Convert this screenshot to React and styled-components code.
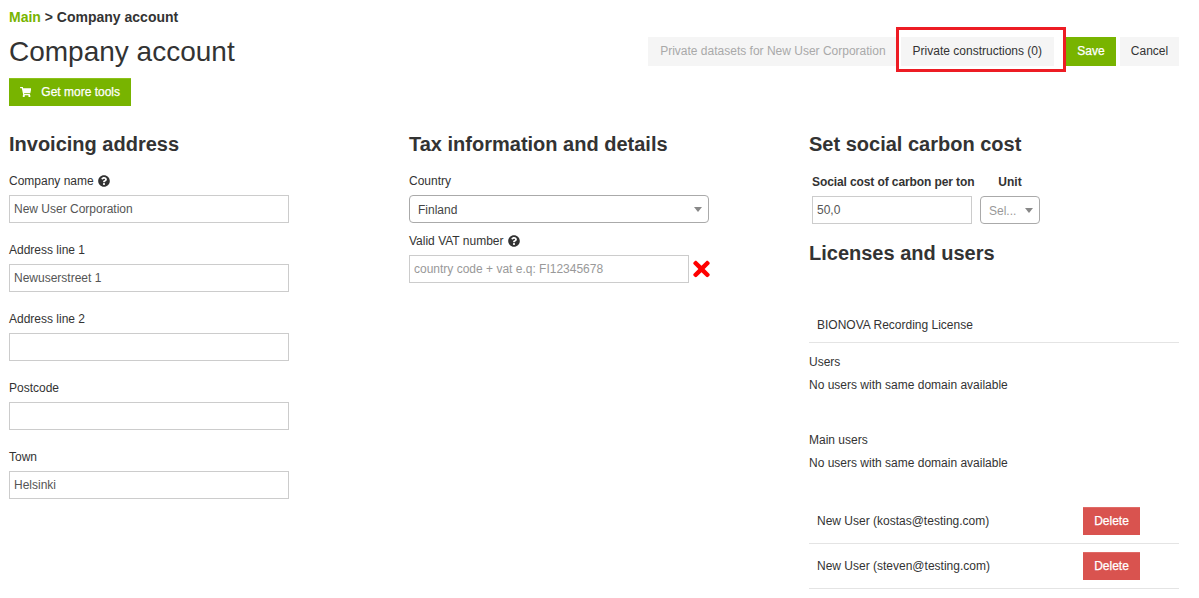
import React from 'react';
import styled, { createGlobalStyle } from 'styled-components';
import { FaShoppingCart, FaQuestionCircle, FaTimes } from 'react-icons/fa';

const GlobalStyle = createGlobalStyle`
  html, body { margin: 0; padding: 0; background: #fff; }
  body {
    font-family: "Liberation Sans", Arial, sans-serif;
    font-size: 12px;
    line-height: 18px;
    color: #333;
  }
  * { box-sizing: border-box; }
`;

const Page = styled.div`
  width: 1199px;
  height: 598px;
  overflow: hidden;
  padding: 8px 20px 0 9px;
`;

const Top = styled.header`
  display: flex;
  justify-content: space-between;
  align-items: flex-start;
`;

const TitleBlock = styled.div`
  display: flex;
  flex-direction: column;
  align-items: flex-start;
`;

const Breadcrumb = styled.div`
  font-weight: bold;
  font-size: 14px;
  line-height: 18px;
  color: #333;
  a { color: #78b400; text-decoration: none; }
`;

const Title = styled.h1`
  margin: 7px 0 0;
  font-size: 28px;
  font-weight: normal;
  line-height: 38px;
  color: #333;
`;

const ToolsButton = styled.button`
  display: flex;
  align-items: center;
  gap: 10px;
  margin-top: 7px;
  width: 122px;
  height: 28px;
  padding: 0 11px 2px;
  border: 0;
  border-top: 1px solid #8cc21a;
  background: #78b400;
  color: #fff;
  font: 12px "Liberation Sans", Arial, sans-serif;
  -webkit-text-stroke: 0.25px #fff;
  white-space: nowrap;
`;

const Actions = styled.div`
  display: flex;
  align-items: center;
  margin-top: 29px;
`;

const ActionButton = styled.button`
  position: relative;
  width: ${(p) => (p.$width ? `${p.$width}px` : 'auto')};
  height: 29px;
  padding: 0 ${(p) => (p.$width ? 0 : 12)}px 2px;
  margin-left: ${(p) => p.$gap || 0}px;
  border: 0;
  background: ${(p) => (p.$primary ? '#78b400' : '#f5f5f5')};
  color: ${(p) => (p.$primary ? '#fff' : p.$muted ? '#a9a9a9' : '#333')};
  font: 12px "Liberation Sans", Arial, sans-serif;
  -webkit-text-stroke: ${(p) => (p.$primary ? '0.25px #fff' : '0')};
`;

const Highlight = styled.span`
  position: absolute;
  left: -5px;
  right: -12px;
  top: -10px;
  bottom: -6px;
  border: 3px solid #ed1c24;
  pointer-events: none;
`;

const Columns = styled.div`
  display: grid;
  grid-template-columns: 400px 400px 370px;
  margin-top: 25px;
`;

const Column = styled.section`
  display: flex;
  flex-direction: column;
  align-items: flex-start;
`;

const Heading = styled.h2`
  margin: 0;
  font-size: 20px;
  font-weight: bold;
  line-height: 26px;
  color: #333;
`;

const Field = styled.div`
  display: flex;
  flex-direction: column;
  margin-top: ${(p) => p.$top ?? 18}px;
`;

const Label = styled.label`
  display: flex;
  align-items: center;
  gap: 4px;
  height: 18px;
  margin-bottom: 5px;
  color: #333;
`;

const Help = styled(FaQuestionCircle)`
  width: 12px;
  height: 12px;
  color: #333;
`;

const Input = styled.input`
  width: ${(p) => p.$width || 280}px;
  height: 28px;
  padding: 0 4px;
  border: 1px solid #ccc;
  outline: 0;
  background: #fff;
  color: #555;
  font: 12px "Liberation Sans", Arial, sans-serif;
  &::placeholder { color: #999; opacity: 1; }
`;

const Select = styled.div`
  display: flex;
  align-items: center;
  justify-content: space-between;
  width: ${(p) => p.$width}px;
  height: 28px;
  padding: 1px 6px 0 8px;
  border: 1px solid #aaa;
  border-radius: 4px;
  color: ${(p) => (p.$muted ? '#999' : '#444')};
  &::after {
    content: "";
    border-style: solid;
    border-width: 5px 4px 0;
    border-color: #888 transparent transparent;
  }
`;

const VatRow = styled.div`
  display: flex;
  align-items: center;
  gap: 4px;
`;

const Cross = styled(FaTimes)`
  width: 17px;
  height: 24px;
  color: #f00;
`;

const CostTable = styled.div`
  display: grid;
  grid-template-columns: 160px 60px;
  column-gap: 8px;
  margin: 16px 0 0 3px;
`;

const CostHead = styled.div`
  font-weight: bold;
  line-height: 18px;
  margin-bottom: 5px;
  letter-spacing: ${(p) => (p.$center ? 0 : -0.1)}px;
  white-space: nowrap;
  text-align: ${(p) => (p.$center ? 'center' : 'left')};
`;

const LicensesHeading = styled(Heading)`
  margin-top: 16px;
`;

const Row = styled.div`
  display: flex;
  align-items: center;
  width: 370px;
  height: ${(p) => p.$height || 45}px;
  padding-left: 8px;
  border-bottom: 1px solid #e4e4e4;
  margin-top: ${(p) => p.$top || 0}px;
`;

const RowName = styled.span`
  width: 266px;
`;

const DeleteButton = styled.button`
  width: 57px;
  height: 28px;
  padding: 0 0 2px;
  border: 0;
  border-top: 1px solid #e06a66;
  background: #d9534f;
  color: #fff;
  font: 12px "Liberation Sans", Arial, sans-serif;
  -webkit-text-stroke: 0.25px #fff;
`;

const Note = styled.p`
  margin: ${(p) => p.$top || 0}px 0 0;
  line-height: 18px;
`;

const fields = [
  { label: 'Company name', value: 'New User Corporation', help: true },
  { label: 'Address line 1', value: 'Newuserstreet 1' },
  { label: 'Address line 2', value: '' },
  { label: 'Postcode', value: '' },
  { label: 'Town', value: 'Helsinki' },
];

const users = ['New User (kostas@testing.com)', 'New User (steven@testing.com)'];

export default function App() {
  return (
    <Page>
      <GlobalStyle />
      <Top>
        <TitleBlock>
          <Breadcrumb><a href="#main">Main</a> &gt; Company account</Breadcrumb>
          <Title>Company account</Title>
          <ToolsButton><FaShoppingCart size={12} /> Get more tools</ToolsButton>
        </TitleBlock>
        <Actions>
          <ActionButton $muted>Private datasets for New User Corporation</ActionButton>
          <ActionButton $gap={3}>Private constructions (0)<Highlight /></ActionButton>
          <ActionButton $primary $width={50} $gap={12}>Save</ActionButton>
          <ActionButton $width={59} $gap={4}>Cancel</ActionButton>
        </Actions>
      </Top>
      <Columns>
        <Column>
          <Heading>Invoicing address</Heading>
          {fields.map((f, i) => (
            <Field key={f.label} $top={i === 0 ? 15 : 18}>
              <Label>{f.label}{f.help && <Help />}</Label>
              <Input readOnly value={f.value} />
            </Field>
          ))}
        </Column>
        <Column>
          <Heading>Tax information and details</Heading>
          <Field $top={15}>
            <Label>Country</Label>
            <Select $width={300}>Finland</Select>
          </Field>
          <Field $top={9}>
            <Label>Valid VAT number<Help /></Label>
            <VatRow>
              <Input readOnly placeholder="country code + vat e.q: FI12345678" />
              <Cross />
            </VatRow>
          </Field>
        </Column>
        <Column>
          <Heading>Set social carbon cost</Heading>
          <CostTable>
            <CostHead>Social cost of carbon per ton</CostHead>
            <CostHead $center>Unit</CostHead>
            <Input readOnly value="50,0" $width={160} />
            <Select $width={60} $muted>Sel...</Select>
          </CostTable>
          <LicensesHeading>Licenses and users</LicensesHeading>
          <Row $top={41} $height={36}>BIONOVA Recording License</Row>
          <Note $top={10}>Users</Note>
          <Note $top={5}>No users with same domain available</Note>
          <Note $top={37}>Main users</Note>
          <Note $top={5}>No users with same domain available</Note>
          <Row $top={27}>
            <RowName>{users[0]}</RowName>
            <DeleteButton>Delete</DeleteButton>
          </Row>
          <Row>
            <RowName>{users[1]}</RowName>
            <DeleteButton>Delete</DeleteButton>
          </Row>
        </Column>
      </Columns>
    </Page>
  );
}
